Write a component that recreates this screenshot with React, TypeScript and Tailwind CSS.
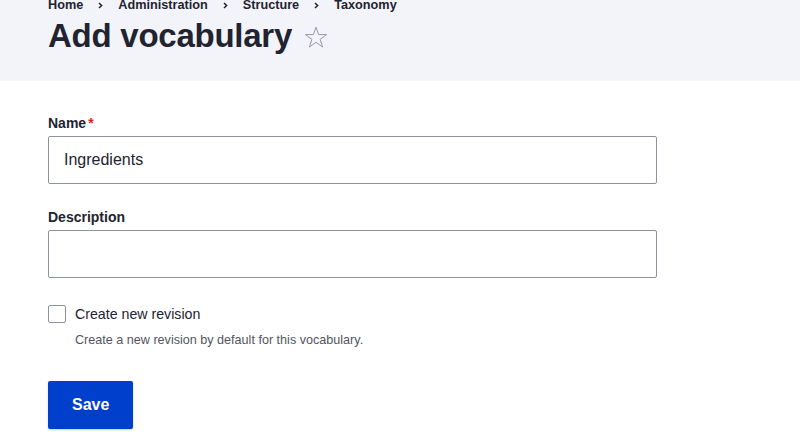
import React from "react";

function Chevron() {
  return (
    <svg width="5" height="7" viewBox="0 0 5 7" className="mx-[15px] mt-[1px]" aria-hidden>
      <path d="M1 1 L3.6 3.5 L1 6" fill="none" stroke="#222330" strokeWidth="1.5" />
    </svg>
  );
}

export default function App() {
  return (
    <div className="min-h-[432px] bg-white text-[#222330]" style={{ fontFamily: '"Liberation Sans", Arial, sans-serif' }}>
      <header className="bg-[#f3f4f9] h-[81px] px-12 overflow-hidden">
        <ol className="flex items-center -mt-[5px] h-5 text-[12.7px] font-bold leading-5">
          <li>Home</li>
          <Chevron />
          <li>Administration</li>
          <Chevron />
          <li>Structure</li>
          <Chevron />
          <li>Taxonomy</li>
        </ol>
        <div className="flex items-center mt-[3px]">
          <h1 className="text-[33px] font-bold leading-[36px] tracking-[-0.25px]">Add vocabulary</h1>
          <svg width="24" height="23" viewBox="0 0 24 23" className="ml-[12px] mt-[3px]" aria-hidden>
            <path
              d="M12 1.2 L14.6 8.6 L22.6 8.6 L16.1 13.3 L18.6 21 L12 16.3 L5.4 21 L7.9 13.3 L1.4 8.6 L9.4 8.6 Z"
              fill="none"
              stroke="#9a9ca6"
              strokeWidth="1"
              strokeLinejoin="miter"
            />
          </svg>
        </div>
      </header>
      <main className="px-12 pt-[33px]">
        <label className="block text-[14px] font-bold leading-[18px] mb-1">
          Name<span className="text-[#dc2323] ml-[2px]">*</span>
        </label>
        <div className="w-[609px] h-12 border border-[#8e929c] rounded-[2px] flex items-center px-[15px] text-[16px]">
          Ingredients
        </div>
        <label className="block text-[14px] font-bold leading-[18px] mt-6 mb-1">Description</label>
        <div className="w-[609px] h-12 border border-[#8e929c] rounded-[2px]" />
        <div className="flex items-center mt-[27px] h-[18px]">
          <span className="w-[18px] h-[18px] border border-[#8e929c] rounded-[2px] bg-white" />
          <span className="ml-[9px] text-[14.2px] leading-[18px]">Create new revision</span>
        </div>
        <p className="ml-[27px] mt-[9px] text-[12.6px] leading-4 text-[#545560]">
          Create a new revision by default for this vocabulary.
        </p>
        <button className="mt-[33px] h-12 px-6 bg-[#003ecc] text-white text-[16px] font-bold rounded-[2px] shadow-[0_1px_2px_rgba(0,0,0,0.2)]">
          Save
        </button>
      </main>
    </div>
  );
}
